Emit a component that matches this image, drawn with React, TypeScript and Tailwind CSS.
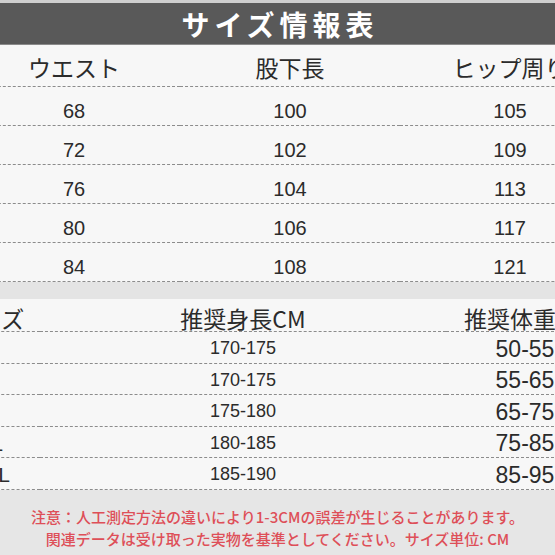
const jp = { fontFamily: '"Noto Sans CJK JP", "Noto Sans", sans-serif' };
const num = { fontFamily: '"Liberation Sans", Arial, sans-serif' };

const waist = [
  { w: '68', l: '100', h: '105' },
  { w: '72', l: '102', h: '109' },
  { w: '76', l: '104', h: '113' },
  { w: '80', l: '106', h: '117' },
  { w: '84', l: '108', h: '121' },
];

const fit = [
  { s: 'S', h: '170-175', kg: '50-55' },
  { s: 'M', h: '170-175', kg: '55-65' },
  { s: 'L', h: '175-180', kg: '65-75' },
  { s: 'XL', h: '180-185', kg: '75-85' },
  { s: 'XXL', h: '185-190', kg: '85-95' },
];

const line = 'border-b-[1.5px] border-dashed border-[#8c8c8c]';

export default function App() {
  return (
    <div className="w-[555px] h-[555px] overflow-hidden bg-[#f7f7f7] text-[#2b2b2b]">
      {/* title band */}
      <div className="h-[3px] bg-[#cfcfcf]" />
      <div className="h-[42px] bg-[#595959] flex items-center justify-center border-b border-[#8a8a8a]">
        <h1 className="text-[28px] font-bold text-white tracking-[5px] pl-[5px] leading-none" style={jp}>
          サイズ情報表
        </h1>
      </div>

      {/* size table */}
      <div className="grid grid-cols-[212px_220px_220px] w-[652px] ml-[-32px]">
        {['ウエスト', '股下長', 'ヒップ周り'].map((t) => (
          <div key={t} className={`h-[42px] flex items-center justify-center pt-[3px] text-[23px] whitespace-nowrap ${line}`} style={jp}>
            {t}
          </div>
        ))}
        {waist.map((r) => (
          <div key={r.w} className="contents">
            {[r.w, r.l, r.h].map((v, i) => (
              <div key={i} className={`h-[39px] flex items-center justify-center pt-[9px] text-[20px] ${line}`} style={num}>
                {v}
              </div>
            ))}
          </div>
        ))}
      </div>

      <div className="h-[17px] bg-[#e4e4e4]" />

      {/* recommended table */}
      <div className="grid grid-cols-[100px_406px_158px] w-[664px] ml-[-60px]">
        {['サイズ', '推奨身長CM', '推奨体重KG'].map((t) => (
          <div key={t} className={`h-[33px] flex items-center justify-center pt-[6px] text-[23px] whitespace-nowrap ${line}`} style={jp}>
            {t}
          </div>
        ))}
        {fit.map((r) => (
          <div key={r.s} className="contents">
            <div className={`h-[31.5px] flex items-center justify-center pt-[3px] text-[21px] ${line}`} style={num}>
              {r.s}
            </div>
            <div className={`h-[31.5px] flex items-center justify-center pt-[3px] text-[18px] ${line}`} style={num}>
              {r.h}
            </div>
            <div className={`h-[31.5px] flex items-center justify-center pt-[3px] text-[23px] ${line}`} style={num}>
              {r.kg}
            </div>
          </div>
        ))}
      </div>

      {/* note */}
      <div className="bg-[#e6e6e6] h-full pt-[16px] text-center text-[15px] leading-[22px] font-medium text-[#de4f58]" style={jp}>
        <p>注意：人工測定方法の違いにより1-3CMの誤差が生じることがあります。</p>
        <p>関連データは受け取った実物を基準としてください。サイズ単位: CM</p>
      </div>
    </div>
  );
}
